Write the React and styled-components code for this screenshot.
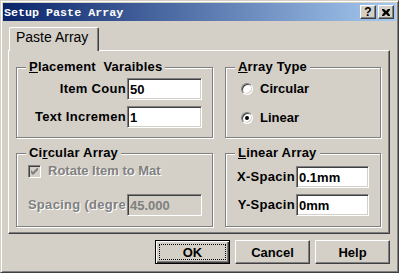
import React from 'react';
import styled, { createGlobalStyle } from 'styled-components';

const GlobalStyle = createGlobalStyle`
  html, body {
    margin: 0;
    padding: 0;
    background: #d4d0c8;
  }
  * {
    box-sizing: border-box;
  }
`;

const Window = styled.div`
  width: 399px;
  height: 273px;
  background: #d4d0c8;
  border: 1px solid;
  border-color: #d4d0c8 #404040 #404040 #d4d0c8;
  box-shadow: inset 1px 1px 0 #fff, inset -1px -1px 0 #808080;
  padding: 2px;
  display: flex;
  flex-direction: column;
  font-family: 'Liberation Sans', Arial, sans-serif;
`;

const TitleBar = styled.div`
  height: 18px;
  display: flex;
  align-items: center;
  padding: 0 2px 0 1px;
  background: linear-gradient(to right, #0a246a, #a6caf0);
`;

const Title = styled.div`
  flex: 1;
  color: #fff;
  font-family: 'Liberation Mono', 'Courier New', monospace;
  font-weight: bold;
  font-size: 11.7px;
  line-height: 18px;
  padding-top: 1px;
  white-space: pre;
`;

const CaptionButton = styled.div`
  width: 16px;
  height: 14px;
  margin-left: ${(p) => p.gap || 0}px;
  background: #d4d0c8;
  border: 1px solid;
  border-color: #fff #404040 #404040 #fff;
  box-shadow: inset -1px -1px 0 #808080;
  display: flex;
  align-items: center;
  justify-content: center;
  font-weight: bold;
  font-size: 12px;
  line-height: 12px;
  color: #000;
`;

const Body = styled.div`
  flex: 1;
  padding: 6px 6px 6px 5px;
  display: flex;
  flex-direction: column;
`;

const TabStrip = styled.div`
  height: 23px;
  display: flex;
`;

const Tab = styled.div`
  position: relative;
  z-index: 1;
  margin-left: 1px;
  width: 90px;
  height: 24px;
  background: #d4d0c8;
  border-top: 1px solid #fff;
  border-left: 1px solid #fff;
  border-right: 1px solid #404040;
  border-radius: 2px 2px 0 0;
  box-shadow: inset -1px 0 0 #808080;
  padding: 1px 0 0 6px;
  font-size: 14px;
  line-height: 16px;
  color: #000;
`;

const Panel = styled.div`
  width: 382px;
  height: 184px;
  border: 1px solid;
  border-color: #fff #404040 #404040 #fff;
  box-shadow: inset -1px -1px 0 #808080;
  padding: 16px 0 0 7px;
  display: grid;
  grid-template-columns: 197px 156px;
  grid-template-rows: 71px 74px;
  column-gap: 12px;
  row-gap: 15px;
  align-content: start;
`;

const Group = styled.div`
  position: relative;
  border: 1px solid #808080;
  box-shadow: inset 1px 1px 0 #fff, 1px 1px 0 #fff;
  padding: ${(p) => p.pad};
  display: flex;
  flex-direction: column;
  gap: ${(p) => p.gap || 6}px;
`;

const Legend = styled.div`
  position: absolute;
  top: -9px;
  left: 9px;
  padding: 0 3px;
  background: #d4d0c8;
  font-weight: bold;
  font-size: 13px;
  line-height: 15px;
  letter-spacing: 0.2px;
  white-space: pre;
  color: #000;
`;

const FieldRow = styled.div`
  display: flex;
  justify-content: flex-end;
  align-items: center;
  height: 22px;
`;

const Label = styled.div`
  white-space: nowrap;
  padding-right: 1px;
  font-weight: bold;
  font-size: 13px;
  line-height: 16px;
  letter-spacing: 0.3px;
  color: ${(p) => (p.disabled ? '#808080' : '#000')};
  text-shadow: ${(p) => (p.disabled ? '1px 1px 0 #fff' : 'none')};
`;

const Field = styled.input`
  width: ${(p) => p.w}px;
  height: 22px;
  margin: 0;
  padding: 0 0 0 2px;
  border: 1px solid;
  border-color: #808080 #fff #fff #808080;
  box-shadow: inset 1px 1px 0 #404040, inset -1px -1px 0 #d4d0c8;
  background: ${(p) => (p.disabled ? '#d4d0c8' : '#fff')};
  font-family: 'Liberation Sans', Arial, sans-serif;
  font-weight: bold;
  font-size: 13px;
  color: #000;
  outline: none;
  &:disabled {
    color: #808080;
    -webkit-text-fill-color: #808080;
    opacity: 1;
  }
`;

const OptionRow = styled.div`
  display: flex;
  align-items: center;
  height: 16px;
  gap: 7px;
  font-weight: bold;
  font-size: 13px;
  line-height: 16px;
  color: ${(p) => (p.disabled ? '#808080' : '#000')};
  text-shadow: ${(p) => (p.disabled ? '1px 1px 0 #fff' : 'none')};
`;

const Radio = styled.span`
  position: relative;
  width: 12px;
  height: 12px;
  border-radius: 50%;
  background: #fff;
  border: 1px solid;
  border-color: #808080 #fff #fff #808080;
  box-shadow: inset 1px 1px 0 #404040, inset -1px -1px 0 #d4d0c8;
  &::after {
    content: '';
    display: ${(p) => (p.checked ? 'block' : 'none')};
    position: absolute;
    left: 3px;
    top: 3px;
    width: 4px;
    height: 4px;
    border-radius: 50%;
    background: #000;
  }
`;

const Check = styled.span`
  width: 13px;
  height: 13px;
  display: flex;
  align-items: center;
  justify-content: center;
  background: #d4d0c8;
  border: 1px solid;
  border-color: #808080 #fff #fff #808080;
  box-shadow: inset 1px 1px 0 #404040, inset -1px -1px 0 #d4d0c8;
`;

const ButtonRow = styled.div`
  margin-top: 6px;
  display: flex;
  justify-content: flex-end;
  gap: 5px;
`;

const Button = styled.div`
  position: relative;
  width: 75px;
  height: 24px;
  background: #d4d0c8;
  border: 1px solid;
  border-color: ${(p) => (p.primary ? '#000' : '#fff #404040 #404040 #fff')};
  box-shadow: ${(p) =>
    p.primary
      ? 'inset 1px 1px 0 #fff, inset -1px -1px 0 #404040, inset -2px -2px 0 #808080'
      : 'inset -1px -1px 0 #808080'};
  display: flex;
  align-items: center;
  justify-content: center;
  font-weight: bold;
  font-size: 13px;
  color: #000;
  &::after {
    content: '';
    display: ${(p) => (p.primary ? 'block' : 'none')};
    position: absolute;
    inset: 3px;
    border: 1px dotted #000;
  }
`;

export default function App() {
  return (
    <>
      <GlobalStyle />
      <Window>
        <TitleBar>
          <Title>Setup Paste Array</Title>
          <CaptionButton>?</CaptionButton>
          <CaptionButton gap={2}>
            <svg width="8" height="7" viewBox="0 0 8 7">
              <path d="M0 0h2l2 2 2-2h2v1L6 3.5 8 6v1H6L4 5 2 7H0V6l2-2.5L0 1z" fill="#000" />
            </svg>
          </CaptionButton>
        </TitleBar>
        <Body>
          <TabStrip>
            <Tab>Paste Array</Tab>
          </TabStrip>
          <Panel>
            <Group pad="10px 10px 0 0">
              <Legend>
                <u>P</u>lacement  Varaibles
              </Legend>
              <FieldRow>
                <Label>Item Coun</Label>
                <Field w={75} defaultValue="50" />
              </FieldRow>
              <FieldRow>
                <Label>Text Incremen</Label>
                <Field w={75} defaultValue="1" />
              </FieldRow>
            </Group>
            <Group pad="13px 0 0 15px" gap={13}>
              <Legend>
                <u>A</u>rray Type
              </Legend>
              <OptionRow>
                <Radio />
                Circular
              </OptionRow>
              <OptionRow>
                <Radio checked />
                Linear
              </OptionRow>
            </Group>
            <Group pad="9px 10px 0 11px" gap={15}>
              <Legend>
                Ci<u>r</u>cular Array
              </Legend>
              <OptionRow disabled>
                <Check>
                  <svg width="7" height="7" viewBox="0 0 7 7">
                    <path d="M0 2v3l2 2 5-5V-1L2 4z" fill="#808080" />
                  </svg>
                </Check>
                Rotate Item to Mat
              </OptionRow>
              <FieldRow>
                <Label disabled>Spacing (degre</Label>
                <Field w={75} defaultValue="45.000" disabled />
              </FieldRow>
            </Group>
            <Group pad="12px 11px 0 0">
              <Legend>
                <u>L</u>inear Array
              </Legend>
              <FieldRow>
                <Label>X-Spacin</Label>
                <Field w={73} defaultValue="0.1mm" />
              </FieldRow>
              <FieldRow>
                <Label>Y-Spacin</Label>
                <Field w={73} defaultValue="0mm" />
              </FieldRow>
            </Group>
          </Panel>
          <ButtonRow>
            <Button primary>OK</Button>
            <Button>Cancel</Button>
            <Button>Help</Button>
          </ButtonRow>
        </Body>
      </Window>
    </>
  );
}
